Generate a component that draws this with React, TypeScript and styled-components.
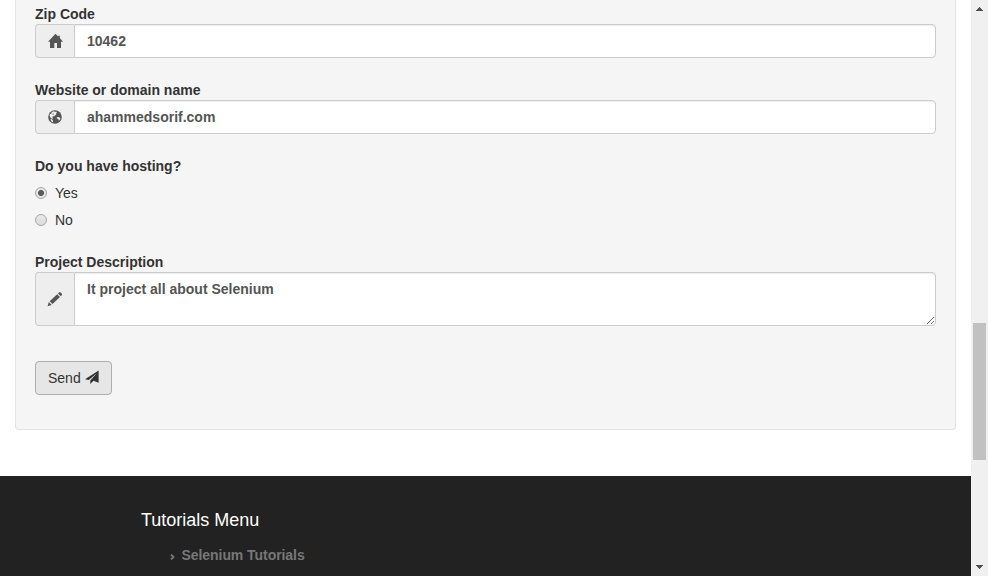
import React from "react";
import styled, { createGlobalStyle } from "styled-components";

const GlobalStyle = createGlobalStyle`
  * { box-sizing: border-box; }
  html, body { margin: 0; padding: 0; overflow: hidden; background: #fff; }
  body { font: 14px/20px "Liberation Sans", Arial, sans-serif; color: #333; }
`;

const Window = styled.div`
  display: flex;
  width: 988px;
  height: 576px;
  overflow: hidden;
`;

const Page = styled.div`
  width: 971px;
  display: flex;
  flex-direction: column;
`;

const Well = styled.form`
  flex: none;
  height: 431px;
  margin: -1px 15px 46px;
  padding: 5px 19px 0;
  background: #f5f5f5;
  border: 1px solid #e3e3e3;
  border-top: 0;
  border-radius: 0 0 4px 4px;
`;

const Field = styled.div<{ $gap?: number }>`
  margin-bottom: ${(p) => p.$gap ?? 22}px;
`;

const Label = styled.label`
  display: block;
  height: 20px;
  font-weight: 700;
  white-space: nowrap;
`;

const InputGroup = styled.div<{ $height?: number }>`
  display: flex;
  height: ${(p) => p.$height ?? 34}px;
`;

const Addon = styled.span`
  flex: none;
  width: 39px;
  display: flex;
  align-items: center;
  justify-content: center;
  color: #555;
  background: #eee;
  border: 1px solid #ccc;
  border-right: 0;
  border-radius: 4px 0 0 4px;
`;

const Input = styled.input`
  flex: 1;
  min-width: 0;
  padding: 6px 12px;
  color: #555;
  font: 700 14px/20px "Liberation Sans", Arial, sans-serif;
  background: #fff;
  border: 1px solid #ccc;
  border-radius: 0 4px 4px 0;
  box-shadow: inset 0 1px 1px rgba(0, 0, 0, 0.075);
  outline: 0;
`;

const TextArea = styled(Input).attrs({ as: "textarea" })`
  height: 54px;
  resize: vertical;
  overflow: hidden;
`;

const RadioRow = styled.label`
  display: flex;
  align-items: center;
  gap: 8px;
  height: 20px;
  margin-top: 7px;
`;

const Radio = styled.span<{ $checked?: boolean }>`
  width: 12px;
  height: 12px;
  border: 1px solid #a6a6a6;
  border-radius: 50%;
  background: ${(p) =>
    p.$checked
      ? "radial-gradient(circle, #5c5c5c 0 2.6px, #e6e6e6 3.5px)"
      : "linear-gradient(#e9e9e9, #dcdcdc)"};
`;

const SendButton = styled.button`
  display: flex;
  align-items: center;
  width: 77px;
  height: 34px;
  padding: 0 12px;
  gap: 4px;
  color: #333;
  font: 14px/20px "Liberation Sans", Arial, sans-serif;
  background: #e6e6e6;
  border: 1px solid #adadad;
  border-radius: 4px;
`;

const Footer = styled.footer`
  flex: 1;
  padding: 34px 0 0 141px;
  background: #222;
`;

const FooterTitle = styled.h4`
  margin: 0;
  height: 20px;
  font-size: 18px;
  font-weight: 400;
  color: #fff;
`;

const FooterItem = styled.a`
  display: flex;
  align-items: center;
  gap: 7px;
  margin: 15px 0 0 28.5px;
  color: #777;
  font-weight: 700;
  letter-spacing: -0.06px;
`;

const Chevron = styled.svg`
  margin-top: 4px;
`;

const ScrollTrack = styled.div`
  width: 17px;
  display: flex;
  flex-direction: column;
  align-items: center;
  justify-content: space-between;
  padding: 7px 0;
  background: #f0f0f0;
`;

const ScrollThumb = styled.div`
  width: 13px;
  height: 137px;
  margin-top: 312px;
  margin-bottom: auto;
  background: #c1c1c1;
`;

const HomeIcon = () => (
  <svg width="16" height="16" viewBox="0 0 16 16" fill="currentColor">
    <path d="M8.5.8 11.2 3.5V2.8h1.6v2.3L16 8.8h-2V15h-4v-5H7.3V15H3V8.8H1L8.5.8Z" />
  </svg>
);

const GlobeIcon = () => (
  <svg width="14" height="14" viewBox="0 0 14 14">
    <circle cx="7" cy="7" r="6.8" fill="#555" />
    <path
      d="M5 1.5 6.4 1.2 7 2.1 8.2 1.6 8.9 2.6 8 3.8 8.3 4.8 7 5.2 6.4 6.2 5.2 6.3 4.2 7.1 5 8 4.6 8.8 3.5 8.4 2.2 7.2 1.6 5.6 2 4.1 3.4 3.7 3.6 2.5Z"
      fill="#eee"
    />
    <path d="M4.2 3.9 5.5 3.4 6.2 3.9 5.1 4.7Z" fill="#555" />
    <path d="M2.4 8.8 4.3 9.5 5.1 11.1 4.9 12.5 3.2 11.3ZM8.6 7.5 10 7.1 11.8 7.5 12.4 8.6 11.8 10 10.8 10.6 10.3 9.1 9.2 8.8Z" fill="#eee" />
  </svg>
);

const PencilIcon = () => (
  <svg width="16" height="16" viewBox="0 0 16 16" fill="currentColor">
    <path d="m.6 15.2 1.2-4.1 2.9 2.9-4.1 1.2ZM2.6 10.2l7.6-7 2.8 2.9-7.5 7-2.9-2.9ZM11 2.4l1.3-1.1c.4-.3.8-.3 1.2.1l1.4 1.4c.3.4.3.8 0 1.1l-1.1 1.3L11 2.4Z" />
  </svg>
);

const SendIcon = () => (
  <svg width="15" height="16" viewBox="0 0 15 16" fill="currentColor">
    <path d="M14.3.2v12.7L8.9 11 5.5 14.2V10.7L12.3 3 3.9 10.2 0 9.4 14.3.2Z" />
  </svg>
);

const ScrollArrow = ({ down = false }: { down?: boolean }) => (
  <svg width="7" height="4" viewBox="0 0 7 4" fill="#505050" shapeRendering="crispEdges">
    <path d={down ? "M0 0h7v1H6v1H5v1H4v1H3V3H2V2H1V1H0Z" : "M3 0h1v1h1v1h1v1h1v1H0V3h1V2h1V1h1Z"} />
  </svg>
);

export default function App() {
  return (
    <>
      <GlobalStyle />
      <Window>
        <Page>
          <Well>
            <Field>
              <Label>Zip Code</Label>
              <InputGroup>
                <Addon><HomeIcon /></Addon>
                <Input defaultValue="10462" />
              </InputGroup>
            </Field>
            <Field>
              <Label>Website or domain name</Label>
              <InputGroup>
                <Addon><GlobeIcon /></Addon>
                <Input defaultValue="ahammedsorif.com" />
              </InputGroup>
            </Field>
            <Field>
              <Label>Do you have hosting?</Label>
              <RadioRow><Radio $checked />Yes</RadioRow>
              <RadioRow><Radio />No</RadioRow>
            </Field>
            <Field $gap={35}>
              <Label>Project Description</Label>
              <InputGroup $height={54}>
                <Addon><PencilIcon /></Addon>
                <TextArea defaultValue="It project all about Selenium" />
              </InputGroup>
            </Field>
            <SendButton type="button">Send <SendIcon /></SendButton>
          </Well>
          <Footer>
            <FooterTitle>Tutorials Menu</FooterTitle>
            <FooterItem>
              <Chevron width="5" height="6" viewBox="0 0 5 6" fill="none" stroke="#777" strokeWidth="1.8">
                <path d="M1 .5 3.5 3 1 5.5" />
              </Chevron>
              Selenium Tutorials
            </FooterItem>
          </Footer>
        </Page>
        <ScrollTrack>
          <ScrollArrow />
          <ScrollThumb />
          <ScrollArrow down />
        </ScrollTrack>
      </Window>
    </>
  );
}
